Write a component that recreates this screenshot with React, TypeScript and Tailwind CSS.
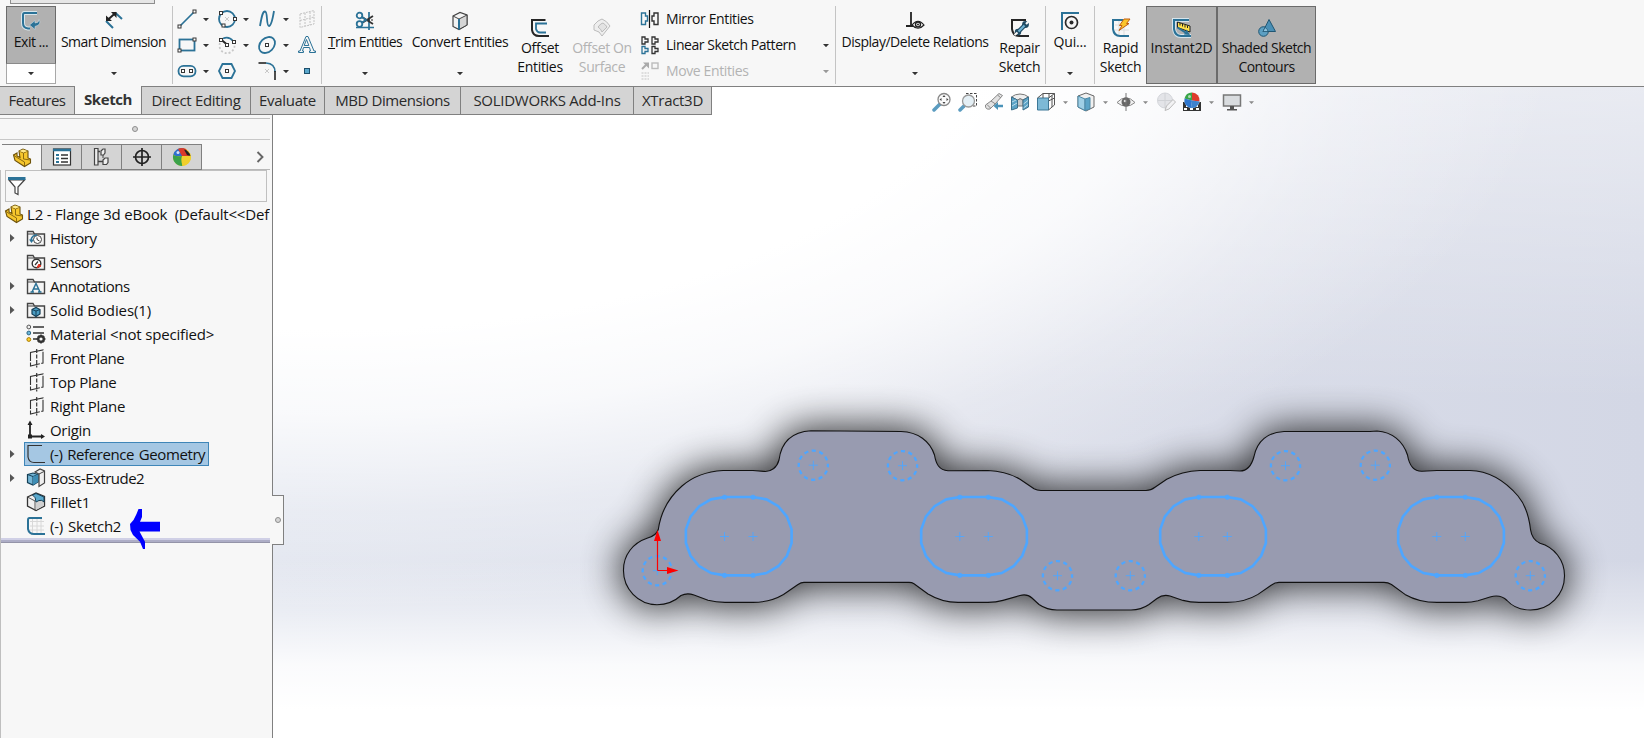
import React, { ReactNode } from "react";

const BLUE = "#2b7297";
const DARK = "#363636";

function Icon({ children, size = 20, className = "" }: { children: ReactNode; size?: number; className?: string }) {
  return (
    <svg width={size} height={size} viewBox="0 0 20 20" fill="none" className={"shrink-0 " + className}>
      {children}
    </svg>
  );
}

function Caret({ color = "#333", className = "" }: { color?: string; className?: string }) {
  return (
    <svg width="6" height="3" viewBox="0 0 6 3" className={"shrink-0 " + className}>
      <path d="M0 0H6L3 3.2Z" fill={color} />
    </svg>
  );
}

function Handle({ x, y }: { x: number; y: number }) {
  return <rect x={x - 1.5} y={y - 1.5} width="3" height="3" fill="#fff" stroke={DARK} />;
}

/* ---------- ribbon icons ---------- */

const ExitIcon = () => (
  <Icon>
    <path d="M16 2H3.500Q2 2 2 4V12Q2 17 7 17.500H9" stroke="#d9e6ec" strokeWidth="4" />
    <path d="M16 2H3.500Q2 2 2 4V12Q2 17 7 17.500H9" stroke={BLUE} strokeWidth="2" />
    <path d="M8.500 14L14 9.500V12Q18 12 18 8.500Q21 13.500 14 15.500V18.500Z" fill={BLUE} stroke="#c9dbe4" strokeWidth=".6" />
  </Icon>
);
const DimensionIcon = () => (
  <Icon>
    <path d="M2 10L9 17M11 1.500L18 8" stroke={BLUE} strokeWidth="2" />
    <path d="M3.500 9L11.500 2" stroke="#222" strokeWidth="2" />
    <path d="M2 10V4.500L8 10ZM12.500 1V7L7 1Z" fill="#222" />
  </Icon>
);
const LineIcon = () => (
  <Icon>
    <path d="M2 18L18 2" stroke={BLUE} strokeWidth="1.700" />
    <Handle x={2.5} y={17.5} />
    <Handle x={17.5} y={2.5} />
  </Icon>
);
const CircleIcon = () => (
  <Icon>
    <circle cx="10" cy="10" r="8" stroke={BLUE} strokeWidth="1.800" />
    <path d="M8 8L12 12M12 8L8 12" stroke="#bbb" strokeWidth=".8" />
    <Handle x={4} y={4} />
    <Handle x={18} y={10} />
    <Handle x={6.5} y={16.5} />
  </Icon>
);
const SplineIcon = () => (
  <Icon>
    <path d="M3 17C5 5 6 2.500 8 2.500C11 2.500 9 17 12 17C14.500 17 16 8 17 2" stroke={BLUE} strokeWidth="1.800" />
  </Icon>
);
const GridPlaneIcon = () => (
  <Icon>
    <path d="M3 5L17 1.500V15L3 18.500ZM3 11.500L17 8M8 4V17M13 3V16" stroke="#c2c2c2" strokeDasharray="2 1" />
  </Icon>
);
const RectIcon = () => (
  <Icon>
    <rect x="2.500" y="4.500" width="15" height="11" stroke={BLUE} strokeWidth="1.800" />
    <Handle x={2.5} y={15.5} />
    <Handle x={17.5} y={4.5} />
  </Icon>
);
const ArcIcon = () => (
  <Icon>
    <path d="M3 8A7.500 7.500 0 1 0 17 8" stroke="#c8c8c8" strokeWidth="1.800" strokeDasharray="2 2" />
    <path d="M6 3.500Q12 1 16 6" stroke={BLUE} strokeWidth="1.600" />
    <path d="M4 4.500L10 9.500" stroke="#222" strokeWidth="2" />
    <Handle x={4} y={5} />
    <Handle x={10} y={10} />
    <Handle x={17} y={7} />
  </Icon>
);
const EllipseIcon = () => (
  <Icon>
    <ellipse cx="10" cy="10" rx="9" ry="6.800" transform="rotate(-45 10 10)" stroke={BLUE} strokeWidth="1.800" />
    <Handle x={10} y={10} />
  </Icon>
);
const TextIcon = () => (
  <Icon>
    <path d="M1.500 17.500H6.500V16H5.500L6.500 12.500H12.500L13.500 16H12.500V17.500H18.500V16H17L11 1.500H9L3 16H1.500ZM7.200 10.500L9.500 4.500L11.800 10.500Z" stroke={BLUE} strokeWidth="1" fill="#f7f7f7" />
  </Icon>
);
const SlotIcon = () => (
  <Icon>
    <rect x="1.500" y="4.800" width="17" height="10.500" rx="5" stroke={BLUE} strokeWidth="1.800" />
    <Handle x={6} y={10} />
    <Handle x={14} y={10} />
  </Icon>
);
const PolygonIcon = () => (
  <Icon>
    <path d="M5.500 3H14.500L18 10L14.500 17H5.500L2 10Z" stroke={BLUE} strokeWidth="1.800" />
    <Handle x={10} y={10} />
  </Icon>
);
const FilletSketchIcon = () => (
  <Icon>
    <path d="M1.500 2H9" stroke="#222" strokeWidth="1.600" />
    <path d="M9 2Q18 2.500 18 11" stroke={BLUE} strokeWidth="1.600" />
    <path d="M18 10V19" stroke="#222" strokeWidth="1.600" />
    <path d="M8 8L12 12M12 8L8 12" stroke="#bbb" strokeWidth=".8" />
  </Icon>
);
const PointIcon = () => (
  <Icon>
    <rect x="7.500" y="7.500" width="5" height="5" fill="#5aa7cc" stroke="#1d4f6b" />
  </Icon>
);
const TrimIcon = () => (
  <Icon>
    <path d="M14 1V19M1 16.500H19" stroke={BLUE} strokeWidth="1.700" />
    <path d="M7 6L18 13M7 12L18 5" stroke="#333" strokeWidth="1.800" />
    <path d="M13 9L19 9" stroke="#222" strokeDasharray="2 1" />
    <circle cx="4.500" cy="4.500" r="2.800" stroke={BLUE} strokeWidth="1.800" />
    <circle cx="4.500" cy="13" r="2.800" stroke={BLUE} strokeWidth="1.800" />
    <path d="M7 6L11 9L7 11.500" stroke={BLUE} strokeWidth="2" />
  </Icon>
);
const ConvertIcon = () => (
  <Icon>
    <path d="M3 5L10 1.500L17 4V14L9 18.500L3 15.500Z" fill="#f3f3f3" stroke="#444" strokeWidth="1.200" />
    <path d="M9 8L17 4V14L9 18.500Z" fill="#d5d5d5" stroke="#444" />
    <path d="M3 5L9 8V18.500" stroke="#444" />
    <path d="M9 8V18.500" stroke={BLUE} strokeWidth="2" />
  </Icon>
);
const OffsetIcon = () => (
  <Icon>
    <path d="M15.500 2H2V12Q3 18 9 18H19" stroke="#262626" strokeWidth="2" />
    <path d="M17 5.500H6V11Q7 14.500 10 14.500H16" stroke={BLUE} strokeWidth="1.800" />
  </Icon>
);
const OffsetSurfaceIcon = () => (
  <Icon>
    <path d="M2 7Q6 2 10 1Q15 3 18 8L10 18Q8 13 2 12Z" fill="#eee" stroke="#bcbcbc" />
    <path d="M6 9Q9 5 11 5Q14 7 15 9L10 14Q9 11 6 9Z" fill="#e3e3e3" stroke="#bcbcbc" />
  </Icon>
);
const MirrorIcon = () => (
  <Icon>
    <path d="M1.500 4H5.500V7H7.500V12H5.500V15.500H1.500Z" stroke={BLUE} strokeWidth="1.400" />
    <path d="M18 4H14V7H12V12H14V15.500H18Z" stroke="#333" strokeWidth="1.400" />
    <path d="M9.500 1V19" stroke="#111" strokeWidth="1.200" />
  </Icon>
);
const PatternIcon = () => (
  <Icon>
    <path d="M2 2H5V4H8V7H5V9H2ZM12 2H15V4H18V7H15V9H12ZM12 11.500H15V13.500H18V16.500H15V18.500H12Z" stroke="#333" strokeWidth="1.300" />
    <path d="M2 11.500H5V13.500H8V16.500H5V18.500H2Z" stroke={BLUE} strokeWidth="1.300" />
  </Icon>
);
const MoveIcon = () => (
  <Icon>
    <path d="M2 8L7 3" stroke="#aaa" strokeWidth="2" />
    <path d="M3 1.500H9V7.500Z" fill="#aaa" />
    <rect x="12" y="2" width="6" height="5.500" stroke="#bbb" strokeWidth="1.400" />
    <path d="M1.500 12H9M1.500 15H9M1.500 18H9" stroke="#d5d5d5" strokeWidth="1.500" strokeDasharray="2 1" />
  </Icon>
);
const RelationsIcon = () => (
  <Icon>
    <path d="M6 1V15M1 15H9" stroke="#222" strokeWidth="1.800" />
    <path d="M7 14Q13 6.500 19 14Q13 20.500 7 14Z" fill="#fff" stroke="#222" strokeWidth="1.200" />
    <circle cx="13" cy="13.500" r="2.500" fill="#fff" stroke="#222" strokeWidth="1.400" />
    <circle cx="13" cy="13.500" r="1" fill="#222" />
  </Icon>
);
const RepairIcon = () => (
  <Icon>
    <path d="M16 2H2V11Q3 18 9 18H19" stroke="#262626" strokeWidth="2" />
    <path d="M8 14L15 7" stroke="#1f4a63" strokeWidth="4.500" />
    <circle cx="8" cy="14" r="3.200" fill="#1f4a63" />
    <circle cx="15.500" cy="6.500" r="3.400" fill="#1f4a63" />
    <path d="M8.500 13.500L14.500 7.500" stroke="#6fb3d4" strokeWidth="2.200" />
    <path d="M16 6L19 3M7.500 14.500L4.500 17" stroke="#f7f7f7" strokeWidth="2.200" />
  </Icon>
);
const SnapIcon = () => (
  <Icon>
    <path d="M1 2H19M2 1V19" stroke={BLUE} strokeWidth="2" />
    <circle cx="11.500" cy="11.500" r="6" stroke="#2a2a2a" strokeWidth="1.700" />
    <circle cx="11.500" cy="11.500" r="2" fill="#2a2a2a" />
  </Icon>
);
const RapidIcon = () => (
  <Icon>
    <path d="M4 7H18M4 12H18M8 3V17M13 3V17" stroke="#ddd" />
    <path d="M12 2H2V11Q3 18 9 18H18" stroke={BLUE} strokeWidth="2" />
    <path d="M13 1L19 1L15.500 5.500H18L8 12.500L11 7.500H8.500Z" fill="#fbc52b" stroke="#c25e12" strokeWidth="1" />
  </Icon>
);
const InstantIcon = () => (
  <Icon>
    <path d="M17 2H2V11Q3 18 9 18H19" stroke="#d6e5ed" strokeWidth="4" />
    <path d="M17 2H2V11Q3 18 9 18H19" stroke={BLUE} strokeWidth="2" />
    <path d="M5.500 4L18 8V14L5.500 9.500Z" fill="#ffe14a" stroke="#222" />
    <path d="M8 5V7.500M10.500 6V8.500M13 7V9.500M15.500 7.500V10" stroke="#222" />
    <path d="M5.500 9.500L15 15.500" stroke={BLUE} strokeWidth="2" />
    <path d="M12 16.500L18 17L14.500 11.500Z" fill={BLUE} />
  </Icon>
);
const ShadedIcon = () => (
  <Icon>
    <circle cx="6.500" cy="13.500" r="4.800" fill="#5c9fc2" stroke="#1f5673" />
    <path d="M12 1.500L18.500 13.500H6Z" fill="#4a8fb5" stroke="#1f5673" />
    <path d="M6 13.500H11A4.800 4.800 0 0 0 8 9.500Z" fill="#8fc4de" stroke="#1f5673" strokeWidth=".7" />
  </Icon>
);

/* ---------- ribbon ---------- */

function Tool({ icon, lines, width, pad = "pt-[12px]", caret, muted, track = "", box = "" }: {
  icon: ReactNode; lines: ReactNode[]; width: string; pad?: string; caret?: boolean; muted?: boolean; track?: string; box?: string;
}) {
  return (
    <div className={"flex h-[78px] shrink-0 flex-col items-center " + width + " " + pad + " " + box}>
      {icon}
      <div className={"whitespace-nowrap text-center text-[14px] leading-[19px] " + track + (caret ? " mt-px" : "") + (muted ? " text-[#b3b3b3]" : " text-[#111]")}>
        {lines.map((l, i) => (
          <div key={i}>{l}</div>
        ))}
      </div>
      {caret && <Caret className="mt-[21px]" />}
    </div>
  );
}

const Divider = () => <div className="h-[78px] w-px shrink-0 bg-[#c4c4c4]" />;

function Cell({ icon, caret }: { icon: ReactNode; caret?: boolean }) {
  return (
    <div className="flex h-[26px] items-center gap-[6px]">
      {icon}
      {caret && <Caret />}
    </div>
  );
}

function ListItem({ icon, label, caret, muted, track = "" }: { icon: ReactNode; label: string; caret?: boolean; muted?: boolean; track?: string }) {
  return (
    <div className="flex h-[26px] items-center">
      {icon}
      <span className={"ml-[6px] whitespace-nowrap text-[14px] leading-[20px] " + track + (muted ? " text-[#b3b3b3]" : " text-[#111]")}>{label}</span>
      {caret && <Caret className="ml-auto" color={muted ? "#999" : "#333"} />}
    </div>
  );
}

function Ribbon() {
  return (
    <header className="flex h-[86px] shrink-0 flex-col bg-[#f7f7f7]">
      <div className="ml-[10px] h-[4px] w-[145px] border border-t-0 border-[#8e8e8e] bg-[#e6e6e6]" />
      <div className="mt-[2px] flex pl-[6px]">
        <div className="flex h-[78px] w-[50px] flex-col">
          <div className="flex h-[58px] flex-col items-center border border-[#6b6b6b] border-b-[#8a8a8a] bg-[#b1b1b1] pt-[4px]">
            <ExitIcon />
            <span className="mt-px whitespace-nowrap text-[14px] leading-[19px] tracking-[-0.5px] text-[#111]">Exit ...</span>
          </div>
          <div className="flex grow items-center justify-center border border-t-0 border-[#a8a8a8] bg-white">
            <Caret />
          </div>
        </div>
        <Tool icon={<DimensionIcon />} lines={["Smart Dimension"]} width="w-[115px]" pad="pt-[5px]" caret track="tracking-[-0.53px]" />
        <div className="w-px" />
        <Divider />
        <div className="grid w-[148px] grid-cols-[40px_40px_40px_20px] pl-[4px]">
          <Cell icon={<LineIcon />} caret />
          <Cell icon={<CircleIcon />} caret />
          <Cell icon={<SplineIcon />} caret />
          <Cell icon={<GridPlaneIcon />} />
          <Cell icon={<RectIcon />} caret />
          <Cell icon={<ArcIcon />} caret />
          <Cell icon={<EllipseIcon />} caret />
          <Cell icon={<TextIcon />} />
          <Cell icon={<SlotIcon />} caret />
          <Cell icon={<PolygonIcon />} />
          <Cell icon={<FilletSketchIcon />} caret />
          <Cell icon={<PointIcon />} />
        </div>
        <Divider />
        <Tool icon={<TrimIcon />} lines={[<><u>T</u>rim Entities</>]} width="w-[86px]" pad="pt-[5px]" caret track="tracking-[-0.57px]" />
        <Tool icon={<ConvertIcon />} lines={["Convert Entities"]} width="w-[104px]" pad="pt-[5px]" caret track="tracking-[-0.4px]" />
        <Tool icon={<OffsetIcon />} lines={["Offset", "Entities"]} width="w-[56px]" track="tracking-[-0.3px]" />
        <Tool icon={<OffsetSurfaceIcon />} lines={["Offset On", "Surface"]} width="w-[68px]" muted track="tracking-[-0.4px]" />
        <div className="flex w-[199px] flex-col pl-[4px] pr-[6px]">
          <ListItem icon={<MirrorIcon />} label="Mirror Entities" track="tracking-[-0.38px]" />
          <ListItem icon={<PatternIcon />} label="Linear Sketch Pattern" caret track="tracking-[-0.46px]" />
          <ListItem icon={<MoveIcon />} label="Move Entities" caret muted track="tracking-[-0.38px]" />
        </div>
        <Divider />
        <Tool icon={<RelationsIcon />} lines={["Display/Delete Relations"]} width="w-[158px]" pad="pt-[5px]" caret track="tracking-[-0.47px]" />
        <Tool icon={<RepairIcon />} lines={["Repair", "Sketch"]} width="w-[51px]" track="tracking-[-0.3px]" />
        <Divider />
        <Tool icon={<SnapIcon />} lines={["Qui..."]} width="w-[48px]" pad="pt-[5px]" caret track="tracking-[-0.2px]" />
        <Divider />
        <Tool icon={<RapidIcon />} lines={["Rapid", "Sketch"]} width="w-[51px]" track="tracking-[-0.3px]" />
        <Tool icon={<InstantIcon />} lines={["Instant2D"]} width="w-[71px]" pad="pt-[11px]" track="tracking-[-0.2px]" box="border border-[#6b6b6b] bg-[#b1b1b1]" />
        <Tool icon={<ShadedIcon />} lines={["Shaded Sketch", "Contours"]} width="w-[99px]" pad="pt-[11px]" track="tracking-[-0.5px]" box="border border-[#6b6b6b] bg-[#b1b1b1]" />
      </div>
    </header>
  );
}

/* ---------- command tabs ---------- */

function Tab({ label, width, active, track = "" }: { label: string; width: string; active?: boolean; track?: string }) {
  return (
    <div
      className={
        "flex h-[29px] shrink-0 items-center justify-center whitespace-nowrap border-b border-[#808080] pb-[2px] text-[15px] leading-[20px] " +
        width + " " + track +
        (active ? " bg-[#f7f7f7] font-bold text-[#333]" : " border-r border-t bg-[#d4d4d4] text-[#2a2a2a]")
      }
    >
      {label}
    </div>
  );
}

/* ---------- view toolbar ---------- */

const views: { icon: ReactNode; caret?: boolean; name: string }[] = [
  { name: "fit", icon: <><path d="M2 18L8 12" stroke="#5b9cc0" strokeWidth="3.500" strokeLinecap="round" /><circle cx="12" cy="7.500" r="6" fill="#fafafa" stroke="#888" strokeWidth="1.300" /><path d="M12 3L13.500 5H10.500ZM12 12L13.500 10H10.500ZM7.500 7.500L9.500 6V9ZM16.500 7.500L14.500 6V9Z" fill="#444" /></> },
  { name: "area", icon: <><path d="M8 1.500H18.500V14H14" stroke="#444" strokeDasharray="2.500 1.500" /><path d="M2 18L6 14" stroke="#5b9cc0" strokeWidth="3.500" strokeLinecap="round" /><circle cx="10.500" cy="9" r="6" fill="#e4eff5" stroke="#999" strokeWidth="1.300" /></> },
  { name: "prev", icon: <><path d="M1.500 13L7 9L15 1.500L18.500 3.500L12 11L6 17Q1 18 1.500 13Z" fill="#e2e2e2" stroke="#888" /><path d="M3 12.500L6.500 16M13.500 3L17 6M7 9L11.500 12" stroke="#888" /><path d="M19 14H13" stroke="#4a93b8" strokeWidth="2.500" /><path d="M14 10V18L9.500 14Z" fill="#4a93b8" /></> },
  { name: "section", icon: <><path d="M1.500 5Q5 2 10 2Q15 2 18.500 5L13 8Q10 5.500 7.500 8Z" fill="#eee" stroke="#777" /><path d="M7.500 8Q10 5.500 13 8V14H7.500Z" fill="#c9c9c9" stroke="#777" /><path d="M1.500 5L7.500 8V16L1.500 18ZM13 8L18.500 5V15L13 18Z" fill="#5ba3c6" stroke="#3d6f8a" /><path d="M2 10L6 8M2 14L7 11M13.500 12L18 8.500M13.500 16L18 12.500" stroke="#d4eaf4" strokeWidth=".8" /></> },
  { name: "orient", caret: true, icon: <><path d="M1.500 6H12.500V18H1.500Z" fill="#7db9d6" stroke="#3d7897" /><path d="M1.500 6L7 1.500H18.500L12.500 6M18.500 1.500V13L12.500 18M7 1.500V6M12.500 9L18.500 6M13 1.500V6M16 3.500V15" stroke="#555" /></> },
  { name: "display", caret: true, icon: <><path d="M2 4L10 1L18 4V15L10 19L2 15Z" fill="#f0f0f0" stroke="#666" /><path d="M2 4L9 7V18.500L2 15Z" fill="#9fcfe5" stroke="#4d88a5" /><path d="M9 7L14 5.500V17L9 18.500Z" fill="#5ba3c6" stroke="#4d88a5" /></> },
  { name: "eye", caret: true, icon: <><path d="M1 10.500Q10 1 19 10.500Q10 18 1 10.500Z" fill="#f2f2f2" stroke="#888" /><circle cx="10" cy="10" r="4.500" fill="#666" /><circle cx="9" cy="9" r="1.300" fill="#ddd" /><path d="M10 1V19" stroke="#777" /></> },
  { name: "edit", icon: <><circle cx="9" cy="8.500" r="7.500" fill="#e3e4e8" stroke="#d3d5da" /><path d="M9 1V16M1.500 8.500H16.500" stroke="#d0d2d6" /><path d="M9 18.500L10.500 14L17 7.500L19.500 10L13 17Z" fill="#f2f2f4" stroke="#bbb" /></> },
  { name: "scene", caret: true, icon: <><path d="M1 10V19H19V10Z" fill="#333" /><path d="M2 17H5M8 17H11M14 17H17M4 14H7M13 14H16" stroke="#fff" strokeWidth="2" /><circle cx="10" cy="8.200" r="7.800" fill="#e9edf2" /><path d="M10 8.500L2.500 6.500A7.800 7.800 0 0 1 10 .5Z" fill="#3aa648" /><path d="M10 8.500V.5A7.800 7.800 0 0 1 17.500 9.500Z" fill="#de3b2c" /><path d="M10 8.500L17.500 9.500A7.800 7.800 0 0 1 9 16Z" fill="#3f83cf" /><path d="M10 8.500L9 16A7.800 7.800 0 0 1 2.500 6.500Z" fill="#2f77cf" /><circle cx="7.500" cy="4.500" r="1.500" fill="#fff" opacity=".6" /></> },
  { name: "monitor", caret: true, icon: <><rect x="1.500" y="3" width="17" height="11" fill="#d9dcdf" stroke="#777" strokeWidth="1.500" /><path d="M8 14H12V17H15V18.500H5V17H8Z" fill="#555" /></> },
];

function ViewToolbar() {
  return (
    <div className="ml-[221px] flex h-[30px] items-center gap-[6px]">
      {views.map((v) => (
        <div key={v.name} className="flex items-center gap-[6px]">
          <Icon>{v.icon}</Icon>
          {v.caret && <Caret color="#8a8a8a" className="ml-px mr-[2px] w-[5px]" />}
        </div>
      ))}
    </div>
  );
}

/* ---------- feature tree ---------- */

const PartIcon = () => (
  <Icon>
    <path d="M1.500 7L5 5V8L8 9.500L7 3L11 1L16 3V10L18.500 11V15L12.500 18.500L3 12.500Z" fill="#f6c62c" stroke="#6d520a" strokeWidth="1.100" />
    <path d="M7 3L11.500 5L16 3M11.500 5V11L18.500 12M1.500 7L5 9.500L12.500 14V18" stroke="#8b6a10" />
    <path d="M7.500 3L11 1.500L15.500 3L11.500 4.500Z" fill="#ffe98a" />
  </Icon>
);
const Folder = ({ children }: { children?: ReactNode }) => (
  <Icon>
    <path d="M1.500 17.500V3.500H7L8.500 6H18.500V17.500Z" fill="#f4f4f4" stroke="#444" strokeWidth="1.400" />
    <path d="M1.500 6H8" stroke="#444" />
    {children}
  </Icon>
);
const HistoryIcon = () => (
  <Folder>
    <circle cx="11.500" cy="11.500" r="4" fill="#fff" stroke="#444" />
    <path d="M11 9.500V11.500L13.500 13" stroke="#333" />
    <path d="M5 12Q6 7 11 7" stroke={BLUE} strokeWidth="1.600" />
    <path d="M3 11.500H8L5.500 15Z" fill={BLUE} />
  </Folder>
);
const SensorsIcon = () => (
  <Folder>
    <circle cx="10.500" cy="11.500" r="4.300" fill="#fff" stroke="#333" strokeWidth="1.400" />
    <path d="M13 12L11 15.500L15 14Z" fill="#e0301e" stroke="#e0301e" />
    <path d="M9 13L12 9.500" stroke="#333" strokeWidth="1.200" />
  </Folder>
);
const AnnotationsIcon = () => (
  <Folder>
    <path d="M6 16L10 7.500L14 16M7.500 13H12.500M4.500 16H8M12 16H15.500" stroke={BLUE} strokeWidth="1.500" />
  </Folder>
);
const BodiesIcon = () => (
  <Folder>
    <path d="M6 9.500L10 7.500L14 9.500V14L10 16.500L6 14Z" fill="#4b9cc2" stroke="#143f57" strokeWidth="1.200" />
    <path d="M6 9.500L10 11L14 9.500M10 11V16" stroke="#143f57" />
  </Folder>
);
const MaterialIcon = () => (
  <Icon>
    <circle cx="2.800" cy="3" r="1.900" fill="#eee" stroke="#555" />
    <circle cx="2.800" cy="9" r="1.900" fill="#6db7da" stroke="#2c6583" />
    <circle cx="2.800" cy="15.500" r="1.900" fill="#ffd02b" stroke="#a87a00" />
    <path d="M7 3H18M7 9H18M7 15H11" stroke="#333" strokeWidth="1.700" />
    <circle cx="15" cy="15" r="2.800" stroke="#333" strokeWidth="2.400" />
    <path d="M15 10.500V12M15 18V19.500M10.500 15H12M18 15H19.500M12 12L13 13M17 17L18 18M18 12L17 13M12 18L13 17" stroke="#333" strokeWidth="1.600" />
  </Icon>
);
const PlaneIcon = () => (
  <Icon>
    <path d="M4.500 4.500L17 2V15L4.500 18Z" stroke="#333" strokeWidth="1.100" strokeDasharray="13 1.500" />
    <path d="M10.700 1V19.500" stroke="#333" strokeWidth="1.200" strokeDasharray="4 1.500" />
  </Icon>
);
const OriginIcon = () => (
  <Icon>
    <path d="M4 3V16.500H17" stroke="#222" strokeWidth="1.800" />
    <path d="M1.500 5L4 .5L6.500 5ZM15 14L19 16.500L15 19Z" fill="#222" />
    <rect x="2" y="14.500" width="4" height="4" fill="#222" />
  </Icon>
);
const SketchRefIcon = () => (
  <Icon>
    <path d="M16 1.500H2V13Q3 18.500 8 18.500H19" stroke="#333" strokeWidth="1.200" />
  </Icon>
);
const ExtrudeIcon = () => (
  <Icon>
    <path d="M9 4L14 1L18.500 3V15L13 18.500V6Z" fill="#f0f0f0" stroke="#444" strokeWidth="1.200" />
    <path d="M13 6L18 3.500" stroke="#444" />
    <path d="M1.500 6.500L7 5L12 6.500V14L7 17L1.500 14.500Z" fill="#74b6d6" stroke="#153f56" strokeWidth="1.200" />
    <path d="M1.500 6.500L7 8.500L12 6.500M7 8.500V17" stroke="#153f56" />
    <path d="M7 8.500L12 6.500V14L7 17Z" fill="#3e8db4" />
  </Icon>
);
const FilletIcon = () => (
  <Icon>
    <path d="M1.500 5L10 1L18.500 4.500V14L10 18.500L1.500 14Z" fill="#f0f0f0" stroke="#333" strokeWidth="1.300" />
    <path d="M10 10V18L18 13.500V9Q15 7 10 10Z" fill="#d0d0d0" />
    <path d="M1.500 5L9 9V18.500" stroke="#555" />
    <path d="M6.500 3L10 1.500L18 5V10Q16 7.500 13 8.500L10 10Q10 5 6.500 3Z" fill="#5ba9cd" stroke="#153f56" />
  </Icon>
);
const SketchIcon = () => (
  <Icon>
    <path d="M4 5.500H18M4 10H18M4 14H18M6.500 2V18M11 2V18M15 2V18" stroke="#d8d8d8" />
    <path d="M16 2H3.500Q2 2 2 4V13Q3 18 8 18H19" stroke={BLUE} strokeWidth="2" />
  </Icon>
);

const tree: { label: string; icon: ReactNode; open?: boolean; selected?: boolean; track: string }[] = [
  { label: "History", icon: <HistoryIcon />, open: true, track: "tracking-[-0.5px]" },
  { label: "Sensors", icon: <SensorsIcon />, track: "tracking-[-0.55px]" },
  { label: "Annotations", icon: <AnnotationsIcon />, open: true, track: "tracking-[-0.5px]" },
  { label: "Solid Bodies(1)", icon: <BodiesIcon />, open: true, track: "tracking-[-0.1px]" },
  { label: "Material <not specified>", icon: <MaterialIcon />, track: "tracking-[-0.17px]" },
  { label: "Front Plane", icon: <PlaneIcon />, track: "tracking-[-0.55px]" },
  { label: "Top Plane", icon: <PlaneIcon />, track: "tracking-[-0.3px]" },
  { label: "Right Plane", icon: <PlaneIcon />, track: "tracking-[-0.3px]" },
  { label: "Origin", icon: <OriginIcon />, track: "tracking-[-0.3px]" },
  { label: "(-) Reference Geometry", icon: <SketchRefIcon />, open: true, selected: true, track: "tracking-[-0.4px] [word-spacing:1.2px]" },
  { label: "Boss-Extrude2", icon: <ExtrudeIcon />, open: true, track: "tracking-[-0.52px]" },
  { label: "Fillet1", icon: <FilletIcon />, track: "tracking-[-0.2px]" },
  { label: "(-) Sketch2", icon: <SketchIcon />, track: "tracking-[-0.25px] [word-spacing:1.5px]" },
];

const panelTabs: ReactNode[] = [
  <PartIcon />,
  <Icon>
    <rect x="1.500" y="2" width="17" height="16" fill="#fff" stroke="#333" strokeWidth="1.200" />
    <path d="M1 3H19" stroke={BLUE} strokeWidth="2.500" />
    <path d="M4 8H7M4 11.500H7M4 15H7" stroke={BLUE} strokeWidth="2" />
    <path d="M9 8H16M9 11.500H16M9 15H16" stroke="#333" strokeWidth="1.400" />
  </Icon>,
  <Icon>
    <path d="M6 4.500H8M6 14.500H12" stroke="#444" strokeWidth="1.300" />
    <path d="M2.500 1.500H6V18H2.500Z" fill="#eee" stroke="#444" strokeWidth="1.200" />
    <path d="M9 4L11 2H13V6L11.500 8H9ZM11 13L13 11H16V15.500L14.500 17.500H11Z" fill="#eee" stroke="#444" strokeWidth="1.200" />
    <path d="M11 8V11" stroke="#444" />
  </Icon>,
  <Icon>
    <circle cx="10" cy="10" r="6.500" stroke="#222" strokeWidth="1.700" />
    <path d="M10 1V19M1 10H19" stroke="#222" strokeWidth="1.700" />
  </Icon>,
  <Icon>
    <circle cx="10" cy="10" r="9" fill="#f0cf2c" />
    <path d="M10 9Q5 10 1.200 8A9 9 0 0 1 12 1.200Z" fill="#2d6fd0" />
    <path d="M10 9L6 1.900A9 9 0 0 1 14 2L17.500 9Z" fill="#d93a2b" />
    <path d="M1.200 8Q5 10 10 9Q9 14 10.500 19A9 9 0 0 1 1.200 8Z" fill="#3ba24a" />
    <path d="M10 9Q9 14 10.500 19A9 9 0 0 0 19 9Z" fill="#f0cf2c" />
    <path d="M12 2.500Q17 3.500 18.500 9L15 8Z" fill="#222" />
    <circle cx="6" cy="5.500" r="1.500" fill="#fff" opacity=".8" />
  </Icon>,
];

function Sidebar() {
  return (
    <aside className="flex w-[273px] shrink-0 flex-col border-r border-[#808080] bg-[#f7f7f7] pr-[2px]">
      <div className="h-[4px] border-b border-[#bfbfbf]" />
      <div className="flex h-[21px] items-center justify-center border-b border-[#c8c8c8] pr-[1px]">
        <div className="size-[6px] rounded-full border border-[#8e8e8e] bg-[#d5d5d5]" />
      </div>
      <div className="mt-[4px] flex h-[26px] shrink-0">
        {panelTabs.map((icon, i) => (
          <div
            key={i}
            className={
              "flex items-center justify-center border-r border-t border-[#808080] " +
              (i === 0 ? "ml-[2px] w-[40px]" : "w-[40px] border-b bg-[#d4d4d4]")
            }
          >
            {icon}
          </div>
        ))}
        <div className="flex grow items-center justify-end border-b border-[#b8b8b8] pr-[6px]">
          <svg width="8" height="12" viewBox="0 0 8 12" fill="none">
            <path d="M1.500 1L6.500 6L1.500 11" stroke="#666" strokeWidth="1.900" />
          </svg>
        </div>
      </div>
      <div className="flex grow flex-col border-l border-[#bfbfbf]">
        <div className="ml-[4px] mr-[3px] flex h-[32px] items-center border border-[#c0c0c0] pl-px">
          <Icon>
            <path d="M2 4L8 11V17L11 18.500V11L17.500 4Z" fill="#fff" stroke="#444" strokeWidth="1.200" />
            <path d="M1 2.500H18.500" stroke={BLUE} strokeWidth="3" />
          </Icon>
        </div>
        <div className="flex h-[24px] items-center overflow-hidden whitespace-pre pl-[3px] text-[15px] leading-[22px] text-[#111]">
          <PartIcon />
          <span className="ml-[3px] tracking-[-0.2px]">{"L2 - Flange 3d eBook  (Default<<Def"}</span>
        </div>
        {tree.map((row) => (
          <div key={row.label} className="flex h-[24px] items-center">
            <svg width="5" height="8" viewBox="0 0 5 8" className="ml-[9px] shrink-0">
              {row.open && <path d="M0 0L4.500 4L0 8Z" fill="#555" />}
            </svg>
            <div
              className={
                "ml-[9px] flex h-[24px] items-center border pl-px " +
                (row.selected ? "w-[185px] border-[#3f86b8] bg-[#a5c7e3]" : "border-transparent")
              }
            >
              {row.icon}
              <span className={"ml-[4px] whitespace-nowrap text-[15px] leading-[22px] text-[#111] " + row.track}>{row.label}</span>
            </div>
          </div>
        ))}
        <div className="h-[5px] border-b border-[#9494a8] bg-linear-to-b from-[#d0d0e6] from-50% to-[#adadc6] to-50%" />
      </div>
    </aside>
  );
}

/* ---------- model view ---------- */

const outline =
  "M657 604.700A34 34 0 0 1 623.500 570C623.500 555 633 543 647 538.300Q656 536 658.300 529.500C661 511 668 498 682 486Q698 472 723 470.500L753 470.500L764 471.400C771 472 777 467.500 779 460C781 444 790 432 811 430.700L901 431.500C918 432 930 441 934.500 455C936 464 939 470 948 470.700L988 470.500Q1006 471 1020 479.300L1034 488.800Q1037 490.500 1041 490.500H1146Q1151 490.500 1155 487.300L1166.700 479.300Q1182 471 1200 470.500H1230L1240 471C1248 471 1252 464 1254 456.500C1257 441 1268 432 1284 431.500H1370L1377 431C1392 432 1403 441 1407.500 455C1409 464 1413 471.500 1422 471.300L1437 470.500H1470C1490 471 1506 482 1518 496Q1528 508 1530.500 529.500C1531.500 537 1535 541 1540 543.200C1554 547 1564.500 560 1564.500 575.500A34 34 0 0 1 1530.500 610C1520 610 1512 606 1507 600.500C1502 595.500 1497 595 1490 597L1478 600.700Q1471 602.400 1465 602.400H1437Q1419 602.400 1405 594.400L1391.500 584.500Q1388 582.400 1384 582.400H1279Q1275 582.400 1271.500 585L1258 594.400Q1245 602.400 1227 602.400H1199Q1190 602.400 1183 600.400L1170 596Q1163 594 1157 598.500L1149 604.500Q1141 610 1131 610H1057Q1047 610 1039 604.500L1032 598Q1027 593.500 1020 595.500L1003 600.400Q996 602.400 988 602.400H958Q942 602.400 928 594L914 583.700Q912 582.400 909 582.400H804Q801 582.400 798 584.500L783.500 594.500Q770 602.400 753 602.400H725Q716 602.400 708 600.300L694 595Q687 592.500 681 595.500Q671 604.700 657 604.700Z";

const slots = [724.5, 959.8, 1198.8, 1436.8];
const holes: [number, number][] = [
  [813.3, 465.2], [902.5, 465.7], [657.3, 570.7], [1057.5, 575.7],
  [1130.3, 575.7], [1285.5, 465.7], [1375.3, 465.2], [1530.3, 575.7],
];

function slotPoints(x: number) {
  const pts: string[] = [];
  for (let side = 0; side < 2; side++) {
    for (let i = 0; i <= 9; i++) {
      const a = ((side * 180 - 90 + i * 20) * Math.PI) / 180;
      pts.push(`${x + (side ? 0 : 28.5) + 39.2 * Math.cos(a)},${536.2 + 39.2 * Math.sin(a)}`);
    }
  }
  return pts.join(" ");
}

function ModelView() {
  return (
    <svg className="absolute inset-0" width="1371" height="651" viewBox="273 87 1371 651" fill="none">
      <defs>
        <linearGradient id="base" gradientUnits="userSpaceOnUse" x1="273" y1="0" x2="1644" y2="0">
          <stop offset="0" stopColor="#e0e4ee" />
          <stop offset=".5" stopColor="#dcdfea" />
          <stop offset="1" stopColor="#d3d7e5" />
        </linearGradient>
        <radialGradient id="glow" gradientUnits="userSpaceOnUse" cx="0" cy="0" r="1" gradientTransform="translate(330 0) scale(1240 610)">
          <stop offset=".54" stopColor="#fff" />
          <stop offset=".68" stopColor="#fff" stopOpacity=".8" />
          <stop offset=".84" stopColor="#fff" stopOpacity=".3" />
          <stop offset="1" stopColor="#fff" stopOpacity="0" />
        </radialGradient>
        <linearGradient id="floor" gradientUnits="userSpaceOnUse" x1="0" y1="560" x2="0" y2="710">
          <stop offset="0" stopColor="#fff" stopOpacity="0" />
          <stop offset=".35" stopColor="#fff" stopOpacity=".35" />
          <stop offset=".7" stopColor="#fff" stopOpacity=".85" />
          <stop offset="1" stopColor="#fff" />
        </linearGradient>
        <linearGradient id="sky" gradientUnits="userSpaceOnUse" x1="0" y1="86" x2="0" y2="400">
          <stop offset="0" stopColor="#fff" stopOpacity=".5" />
          <stop offset="1" stopColor="#fff" stopOpacity="0" />
        </linearGradient>
        <filter id="soft" x="-10%" y="-50%" width="120%" height="200%">
          <feGaussianBlur stdDeviation="19" />
        </filter>
      </defs>
      <rect x="273" y="86" width="1371" height="652" fill="url(#base)" />
      <rect x="273" y="86" width="1371" height="652" fill="url(#sky)" />
      <rect x="273" y="86" width="1371" height="652" fill="url(#glow)" />
      <rect x="273" y="86" width="1371" height="652" fill="url(#floor)" />
      <path d={outline} fill="#000" stroke="#000" strokeWidth="8" filter="url(#soft)" opacity=".78" />
      <path d={outline} fill="#989bb0" stroke="#111" strokeWidth="1.100" />
      <g stroke="#4ea6ff">
        {slots.map((x) => (
          <g key={x}>
            <polygon points={slotPoints(x)} strokeWidth="2.600" />
            {[x, x + 28.5].map((cx) => (
              <g key={cx}>
                <path d={`M${cx - 4.500} 536.500h9M${cx} 532v9`} strokeWidth=".9" />
                <circle cx={cx} cy="497.200" r="2.300" fill="#4ea6ff" strokeWidth=".5" />
                <circle cx={cx} cy="575.400" r="2.300" fill="#4ea6ff" strokeWidth=".5" />
              </g>
            ))}
          </g>
        ))}
        {holes.map(([x, y]) => (
          <g key={x}>
            <circle cx={x} cy={y} r="14.600" strokeWidth="2.300" strokeDasharray="4.200 3.445" strokeDashoffset="25.030" />
            <path d={`M${x - 4.500} ${y}h9M${x} ${y - 4.500}v9`} strokeWidth=".9" />
          </g>
        ))}
      </g>
      <path d="M657.500 570.500V538M657.500 570.500H669" stroke="#f00" strokeWidth="1.200" />
      <path d="M654 541L657.500 530L661 541ZM667 567L678.500 570.500L667 574Z" fill="#f00" />
    </svg>
  );
}

export default function App() {
  return (
    <div className="relative flex h-[738px] w-[1644px] flex-col overflow-hidden bg-[#f7f7f7] font-['Open_Sans','Noto_Sans',sans-serif]">
      <Ribbon />
      <div className="flex grow">
        <div className="relative flex w-[273px] shrink-0 flex-col">
          <nav className="relative z-10 flex w-[712px]">
            <Tab label="Features" width="w-[75px]" track="tracking-[-0.45px]" />
            <Tab label="Sketch" width="w-[66px]" active track="tracking-[-0.4px]" />
            <Tab label="Direct Editing" width="w-[110px] border-l" track="tracking-[-0.3px]" />
            <Tab label="Evaluate" width="w-[74px]" track="tracking-[-0.3px]" />
            <Tab label="MBD Dimensions" width="w-[136px]" track="tracking-[-0.43px]" />
            <Tab label="SOLIDWORKS Add-Ins" width="w-[173px]" track="tracking-[-0.27px]" />
            <Tab label="XTract3D" width="w-[78px]" track="tracking-[-0.3px]" />
          </nav>
          <div className="flex grow">
            <Sidebar />
          </div>
        </div>
        <main className="relative grow border-t border-[#808080]">
          <ModelView />
          <div className="relative pl-[438px]">
            <ViewToolbar />
          </div>
          <div className="absolute -left-px top-[408px] flex h-[50px] w-[12px] items-center justify-center border border-l-0 border-[#808080] bg-[#f7f7f7]">
            <div className="size-[6px] rounded-full border border-[#8e8e8e] bg-[#d5d5d5]" />
          </div>
        </main>
      </div>
      <svg className="absolute left-[129px] top-[508px]" width="33" height="42" viewBox="129 508 33 42">
        <path d="M138.500 509H142V517L140 521.700H160V531.500H139.500L145 541.700V549H143L140 541.700L133 535L130.500 530L130 524L133.500 520L136.500 514Z" fill="#00f" />
      </svg>
    </div>
  );
}
